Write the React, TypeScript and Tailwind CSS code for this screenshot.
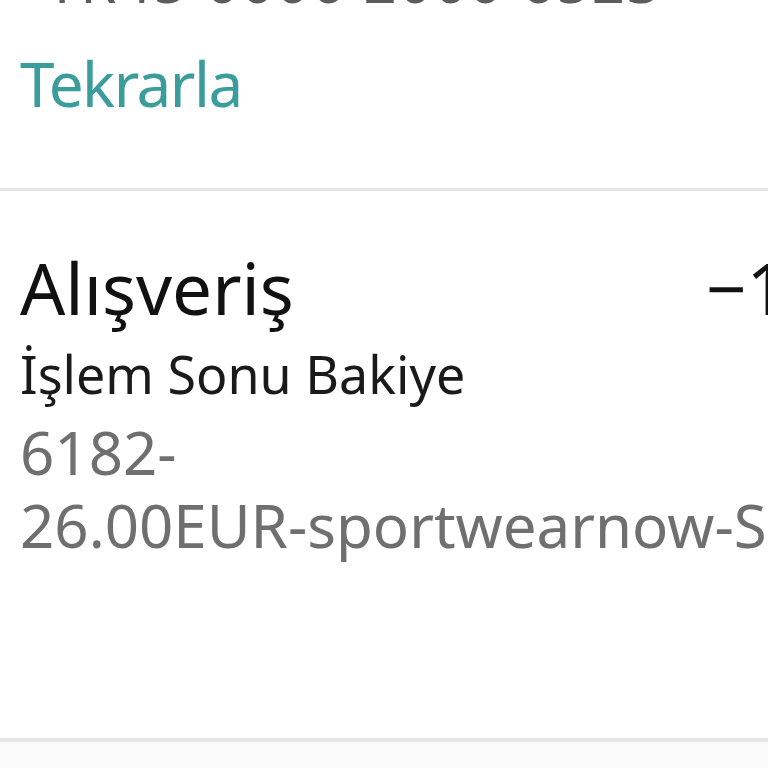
import React from 'react';

export default function App() {
  return (
    <div className="w-[768px] h-[768px] overflow-hidden bg-white" style={{ fontFamily: '"Noto Sans", sans-serif' }}>
      <section className="flex flex-col h-[188px] pl-5">
        <p className="mt-[-55px] pl-[26px] text-[58px] leading-[72px] text-[#5c5c5c] tracking-[2px] whitespace-nowrap">
          TR45 0006 2000 6523
        </p>
        <p className="mt-[30px] text-[62px] leading-[72px] tracking-[-1.5px] text-[#3b9c9c] whitespace-nowrap">Tekrarla</p>
      </section>
      <div className="h-[3px] bg-[#e5e5e5]" />
      <section className="flex flex-col h-[547px] pl-5 pt-[55px]">
        <div className="flex items-baseline whitespace-nowrap">
          <p className="w-[686px] shrink-0 text-[71px] leading-[84px] text-[#111111]">Alışveriş</p>
          <p className="text-[71px] leading-[84px] text-[#111111]">−126,00</p>
        </div>
        <p className="mt-[14px] text-[52px] leading-[60px] text-[#1a1a1a] whitespace-nowrap">İşlem Sonu Bakiye</p>
        <p className="mt-[12px] text-[60px] leading-[73px] text-[#6f6f6f] whitespace-nowrap">6182-</p>
        <p className="text-[60px] leading-[73px] text-[#6f6f6f] whitespace-nowrap">26.00EUR-sportwearnow-SHOP</p>
      </section>
      <div className="h-[4px] bg-[#e6e6e6]" />
      <div className="h-[26px] bg-[#fbfbfb]" />
    </div>
  );
}
